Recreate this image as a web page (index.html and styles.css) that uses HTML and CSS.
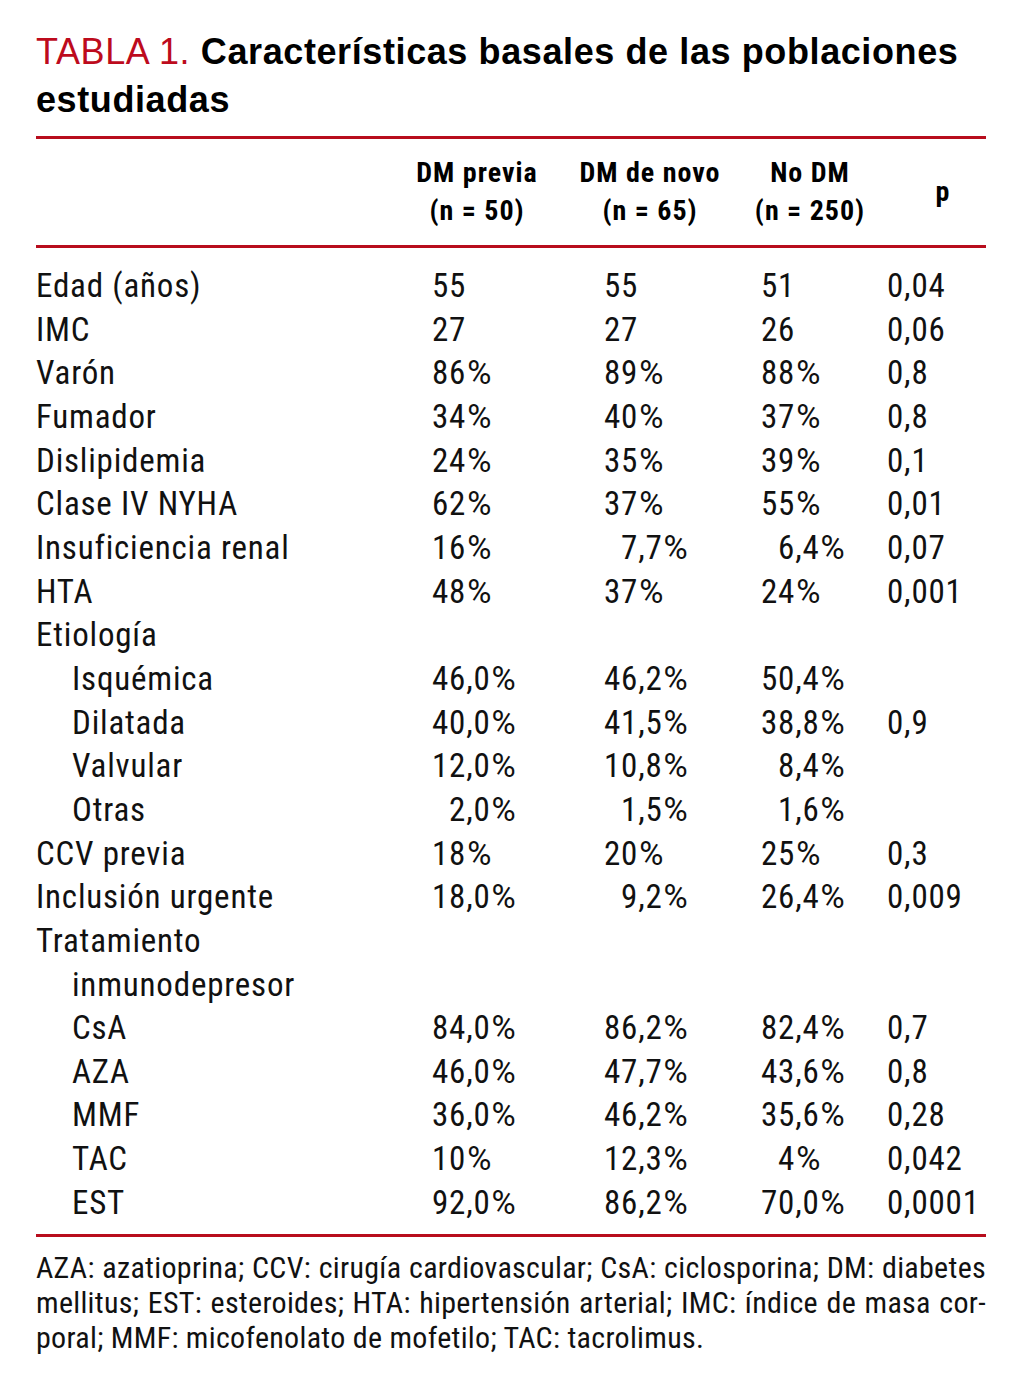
FILE: index.html
```html
<!DOCTYPE html>
<html lang="es">
<head>
<meta charset="utf-8">
<title>Tabla 1</title>
<link rel="stylesheet" href="styles.css">
</head>
<body>
<main class="page">
  <h1 class="title"><span class="label">TABLA 1.</span> Características basales de las poblaciones estudiadas</h1>
  <div class="rule"></div>
  <div class="head">
    <div></div>
    <div class="hcell">DM previa<br>(n = 50)</div>
    <div class="hcell">DM de novo<br>(n = 65)</div>
    <div class="hcell">No DM<br>(n = 250)</div>
    <div class="hcell hp">p</div>
  </div>
  <div class="rule"></div>
  <div class="body">
    <div class="row"><span>Edad (años)</span><span>55</span><span>55</span><span>51</span><span>0,04</span></div>
    <div class="row"><span>IMC</span><span>27</span><span>27</span><span>26</span><span>0,06</span></div>
    <div class="row"><span>Varón</span><span>86<b class="pc">%</b></span><span>89<b class="pc">%</b></span><span>88<b class="pc">%</b></span><span>0,8</span></div>
    <div class="row"><span>Fumador</span><span>34<b class="pc">%</b></span><span>40<b class="pc">%</b></span><span>37<b class="pc">%</b></span><span>0,8</span></div>
    <div class="row"><span>Dislipidemia</span><span>24<b class="pc">%</b></span><span>35<b class="pc">%</b></span><span>39<b class="pc">%</b></span><span>0,1</span></div>
    <div class="row"><span>Clase IV NYHA</span><span>62<b class="pc">%</b></span><span>37<b class="pc">%</b></span><span>55<b class="pc">%</b></span><span>0,01</span></div>
    <div class="row"><span>Insuficiencia renal</span><span>16<b class="pc">%</b></span><span><i class="ph">0</i>7,7<b class="pc">%</b></span><span><i class="ph">0</i>6,4<b class="pc">%</b></span><span>0,07</span></div>
    <div class="row"><span>HTA</span><span>48<b class="pc">%</b></span><span>37<b class="pc">%</b></span><span>24<b class="pc">%</b></span><span>0,001</span></div>
    <div class="row"><span>Etiología</span><span></span><span></span><span></span><span></span></div>
    <div class="row sub"><span>Isquémica</span><span>46,0<b class="pc">%</b></span><span>46,2<b class="pc">%</b></span><span>50,4<b class="pc">%</b></span><span></span></div>
    <div class="row sub"><span>Dilatada</span><span>40,0<b class="pc">%</b></span><span>41,5<b class="pc">%</b></span><span>38,8<b class="pc">%</b></span><span>0,9</span></div>
    <div class="row sub"><span>Valvular</span><span>12,0<b class="pc">%</b></span><span>10,8<b class="pc">%</b></span><span><i class="ph">0</i>8,4<b class="pc">%</b></span><span></span></div>
    <div class="row sub"><span>Otras</span><span><i class="ph">0</i>2,0<b class="pc">%</b></span><span><i class="ph">0</i>1,5<b class="pc">%</b></span><span><i class="ph">0</i>1,6<b class="pc">%</b></span><span></span></div>
    <div class="row"><span>CCV previa</span><span>18<b class="pc">%</b></span><span>20<b class="pc">%</b></span><span>25<b class="pc">%</b></span><span>0,3</span></div>
    <div class="row"><span>Inclusión urgente</span><span>18,0<b class="pc">%</b></span><span><i class="ph">0</i>9,2<b class="pc">%</b></span><span>26,4<b class="pc">%</b></span><span>0,009</span></div>
    <div class="row"><span>Tratamiento</span><span></span><span></span><span></span><span></span></div>
    <div class="row sub"><span>inmunodepresor</span><span></span><span></span><span></span><span></span></div>
    <div class="row sub"><span>CsA</span><span>84,0<b class="pc">%</b></span><span>86,2<b class="pc">%</b></span><span>82,4<b class="pc">%</b></span><span>0,7</span></div>
    <div class="row sub"><span>AZA</span><span>46,0<b class="pc">%</b></span><span>47,7<b class="pc">%</b></span><span>43,6<b class="pc">%</b></span><span>0,8</span></div>
    <div class="row sub"><span>MMF</span><span>36,0<b class="pc">%</b></span><span>46,2<b class="pc">%</b></span><span>35,6<b class="pc">%</b></span><span>0,28</span></div>
    <div class="row sub"><span>TAC</span><span>10<b class="pc">%</b></span><span>12,3<b class="pc">%</b></span><span><i class="ph">0</i>4<b class="pc">%</b></span><span>0,042</span></div>
    <div class="row sub"><span>EST</span><span>92,0<b class="pc">%</b></span><span>86,2<b class="pc">%</b></span><span>70,0<b class="pc">%</b></span><span>0,0001</span></div>
  </div>
  <div class="rule"></div>
  <div class="notes">
    <p class="jline">AZA: azatioprina; CCV: cirugía cardiovascular; CsA: ciclosporina; DM: diabetes</p>
    <p class="jline">mellitus; EST: esteroides; HTA: hipertensión arterial; IMC: índice de masa cor-</p>
    <p>poral; MMF: micofenolato de mofetilo; TAC: tacrolimus.</p>
  </div>
</main>
</body>
</html>
```
FILE: styles.css
```css
html, body {
  margin: 0;
  padding: 0;
  background: #ffffff;
}

.page {
  padding: 28px 38px 0 36px;
  color: #111111;
  font-family: "Roboto Condensed", "Liberation Sans", sans-serif;
}

.title {
  margin: 0 0 12px 0;
  font-family: "Liberation Sans", Arial, sans-serif;
  font-size: 36px;
  line-height: 48px;
  font-weight: bold;
  letter-spacing: 0.6px;
  color: #000000;
}

.title .label {
  font-weight: normal;
  color: #bd0b1d;
}

.rule {
  height: 3px;
  background: #b80d1d;
}

.head {
  display: grid;
  grid-template-columns: 361px 160px 186px 134px 1fr;
  padding: 15px 0 15px 0;
  font-size: 28px;
  line-height: 38px;
  font-weight: bold;
  letter-spacing: 1px;
  color: #000000;
}

.hcell {
  text-align: center;
  white-space: nowrap;
}

.hp {
  align-self: center;
  padding-left: 23px;
}

.body {
  padding: 16px 0 10px 0;
  font-size: 33px;
  line-height: 43.67px;
  letter-spacing: 0.8px;
}

.row {
  display: grid;
  grid-template-columns: 396px 172px 157px 126px 1fr;
  white-space: nowrap;
  height: 43.67px;
}

.row.sub > span:first-child {
  padding-left: 36px;
}

.ph {
  visibility: hidden;
  font-style: normal;
}

.pc {
  font-family: "Roboto", "Roboto Condensed", sans-serif;
  font-weight: normal;
  letter-spacing: 0;
  line-height: 0;
  padding-left: 1px;
}

.notes {
  padding-top: 13px;
  font-size: 30px;
  line-height: 35px;
  letter-spacing: 0.3px;
}

.notes p {
  margin: 0;
  white-space: nowrap;
}

.notes .jline {
  text-align: justify;
  text-align-last: justify;
}
```
